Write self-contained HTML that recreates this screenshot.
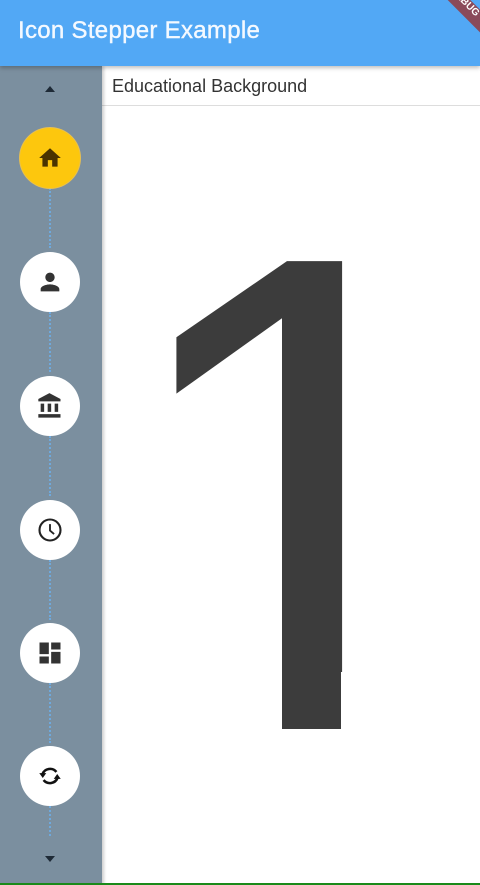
<!DOCTYPE html>
<html><head><meta charset="utf-8"><style>
*{margin:0;padding:0;box-sizing:border-box}
body{width:480px;height:885px;overflow:hidden;background:#fff;font-family:"Liberation Sans",sans-serif;position:relative}
.bar{position:absolute;left:0;top:0;width:480px;height:66px;background:#52a8f5;box-shadow:0 2px 4px rgba(0,0,0,.25);z-index:3;overflow:hidden}
.bar h1{position:absolute;left:18px;top:17px;font-size:24px;font-weight:normal;color:#f4f9ff;letter-spacing:0.3px;-webkit-text-stroke:0.4px #f4f9ff}
.side{position:absolute;left:0;top:66px;width:102px;height:819px;background:#7b8f9f;box-shadow:2px 0 3px rgba(0,0,0,.2);z-index:2}
.c{position:absolute;left:20px;width:60px;height:60px;border-radius:50%;background:#fff;display:flex;align-items:center;justify-content:center}
.dot{position:absolute;left:49px;width:2px;border-left:2px dotted #6fa9dc}
.tri{position:absolute;left:45px;width:0;height:0;border-left:5px solid transparent;border-right:5px solid transparent}
.sub{position:absolute;left:102px;top:66px;width:378px;height:40px;border-bottom:1px solid #ddd;font-size:18px;color:#333;padding:10px 0 0 10px}
.one{position:absolute;left:111px;top:154px;font-size:680px;line-height:1;color:#3c3c3c}
.cov{position:absolute;background:#fff}
.dk{position:absolute;background:#3c3c3c}
.green{position:absolute;left:0;top:883px;width:480px;height:2px;background:#1a8a1a;z-index:4}
.dbg{position:absolute;right:-28px;top:-4px;width:90px;height:16px;background:#8a4a5a;color:#fff;font-size:10px;font-weight:bold;text-align:center;transform:rotate(45deg);z-index:4}
</style></head><body>
<div class="bar"><h1>Icon Stepper Example</h1><div class="dbg">DEBUG</div></div>
<div class="sub">Educational Background</div>
<div class="one">1</div>
<div class="cov" style="left:102px;top:672px;width:180px;height:80px"></div>
<div class="cov" style="left:341px;top:672px;width:139px;height:80px"></div>
<div class="dk" style="left:282px;top:640px;width:59px;height:89px"></div>
<div class="green"></div>
<div class="side">
<div class="tri" style="top:20px;border-bottom:6px solid #1e2a36"></div>
<div class="dot" style="top:122px;height:60px"></div>
<div class="dot" style="top:246px;height:60px"></div>
<div class="dot" style="top:370px;height:60px"></div>
<div class="dot" style="top:494px;height:60px"></div>
<div class="dot" style="top:617px;height:60px"></div>
<div class="dot" style="top:740px;height:30px"></div>
<div class="c" style="top:62px;background:#fdc70d;box-shadow:0 0 0 1px #e8c050"><svg width="26" height="26" viewBox="0 0 24 24"><path fill="#4a3300" d="M10 20v-6h4v6h5v-8h3L12 3 2 12h3v8z"/></svg></div>
<div class="c" style="top:186px"><svg width="28" height="28" viewBox="0 0 24 24"><path fill="#333" d="M12 12c2.2 0 4-1.8 4-4s-1.8-4-4-4-4 1.8-4 4 1.8 4 4 4zm0 2c-2.7 0-8 1.3-8 4v2h16v-2c0-2.7-5.3-4-8-4z"/></svg></div>
<div class="c" style="top:310px"><svg width="28" height="28" viewBox="0 0 24 24"><path fill="#333" d="M4 10v7h3v-7H4zm6 0v7h3v-7h-3zM2 22h19v-3H2v3zm14-12v7h3v-7h-3zm-4.5-9L2 6v2h19V6l-9.5-5z"/></svg></div>
<div class="c" style="top:434px"><svg width="28" height="28" viewBox="0 0 24 24"><circle cx="12" cy="12" r="9" fill="none" stroke="#222" stroke-width="1.8"/><path d="M12 7v5.5l3.5 3" fill="none" stroke="#222" stroke-width="1.6"/></svg></div>
<div class="c" style="top:557px"><svg width="28" height="28" viewBox="0 0 24 24"><path fill="#333" d="M3 13h8V3H3v10zm0 8h8v-6H3v6zm10 0h8V11h-8v10zm0-18v6h8V3h-8z"/></svg></div>
<div class="c" style="top:680px"><svg width="28" height="28" viewBox="0 0 24 24"><path d="M17.5 8.5a7 7 0 0 0-12 2" fill="none" stroke="#111" stroke-width="2.2"/><path d="M6.5 15.5a7 7 0 0 0 12-2" fill="none" stroke="#111" stroke-width="2.2"/><path fill="#111" d="M2.8 9.5l3 4.2 3-4.2zM15.2 14.5l3-4.2 3 4.2z"/></svg></div>
<div class="tri" style="top:790px;border-top:6px solid #1e2a36"></div>
</div>
</body></html>
